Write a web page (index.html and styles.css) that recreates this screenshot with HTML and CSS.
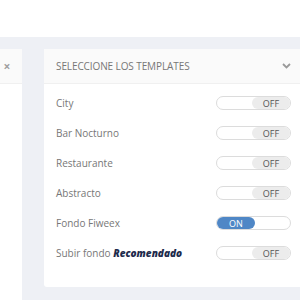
FILE: index.html
```html
<!DOCTYPE html>
<html lang="es">
<head>
    <meta charset="UTF-8">
    <meta name="viewport" content="width=device-width, initial-scale=1.0">
    <link rel="stylesheet" href="styles.css">
    <title>Templates</title>
</head>
<body>
    <div class="topbar"></div>

    <div class="content">
        <div class="card card-side">
            <div class="card-header side-header">
                <span class="close">&times;</span>
            </div>
        </div>

        <div class="card card-main">
            <div class="card-header">
                <span class="title">SELECCIONE LOS TEMPLATES</span>
                <svg class="chevron" width="9" height="6" viewBox="0 0 9 6">
                    <polyline points="1,1 4.5,4.5 8,1" fill="none" stroke="#9a9a9a" stroke-width="1.8"/>
                </svg>
            </div>
            <div class="card-body">
                <div class="row">
                    <span class="label">City</span>
                    <div class="switch"><span class="knob off">OFF</span></div>
                </div>
                <div class="row">
                    <span class="label">Bar Nocturno</span>
                    <div class="switch"><span class="knob off">OFF</span></div>
                </div>
                <div class="row">
                    <span class="label">Restaurante</span>
                    <div class="switch"><span class="knob off">OFF</span></div>
                </div>
                <div class="row">
                    <span class="label">Abstracto</span>
                    <div class="switch"><span class="knob off">OFF</span></div>
                </div>
                <div class="row">
                    <span class="label">Fondo Fiweex</span>
                    <div class="switch switch-on"><span class="knob on">ON</span></div>
                </div>
                <div class="row">
                    <span class="label">Subir fondo <b class="tip">Recomendado</b></span>
                    <div class="switch"><span class="knob off">OFF</span></div>
                </div>
            </div>
        </div>
    </div>
</body>
</html>
```

FILE: styles.css
```css
body {
    margin: 0;
    height: 300px;
    overflow: hidden;
    font-family: "Open Sans", "Liberation Sans", sans-serif;
    color: #777;
    background-color: #eef0f5;
}

.topbar {
    height: 37px;
    background-color: #fff;
}

.content {
    display: flex;
    gap: 22px;
    padding-top: 12px;
    align-items: flex-start;
}

.card {
    background-color: #fff;
    border-radius: 3px;
    flex-shrink: 0;
}

.card-side {
    width: 22px;
    height: 260px;
    border-radius: 0 3px 3px 0;
}

.card-main {
    width: 259px;
}

.card-header {
    height: 35px;
    display: flex;
    align-items: center;
    justify-content: space-between;
    padding: 0 12px;
    background-color: #fafafa;
    border-bottom: 1px solid #f0f0f0;
    box-sizing: border-box;
}

.side-header {
    padding: 0;
    justify-content: center;
}

.close {
    font-size: 12px;
    font-weight: bold;
    color: #a0a0a0;
    margin-left: -8px;
}

.title {
    font-size: 10px;
    letter-spacing: -0.1px;
}

.card-body {
    padding: 4px 12px 19px;
}

.row {
    display: flex;
    align-items: center;
    justify-content: space-between;
    height: 30px;
    font-size: 10px;
}

.tip {
    font-style: italic;
    font-weight: 800;
    color: #1d2b4c;
}

.switch {
    width: 75px;
    height: 14px;
    border: 1px solid #dcdcdc;
    border-radius: 8px;
    box-sizing: border-box;
    display: flex;
    justify-content: flex-end;
    background-color: #fff;
}

.switch-on {
    justify-content: flex-start;
}

.knob {
    width: 38px;
    height: 100%;
    border-radius: 7px;
    font-size: 9px;
    display: flex;
    align-items: center;
    justify-content: center;
}

.knob.off {
    background-color: #ececec;
    color: #555;
}

.knob.on {
    background-color: #4f87c6;
    color: #fff;
}
```
